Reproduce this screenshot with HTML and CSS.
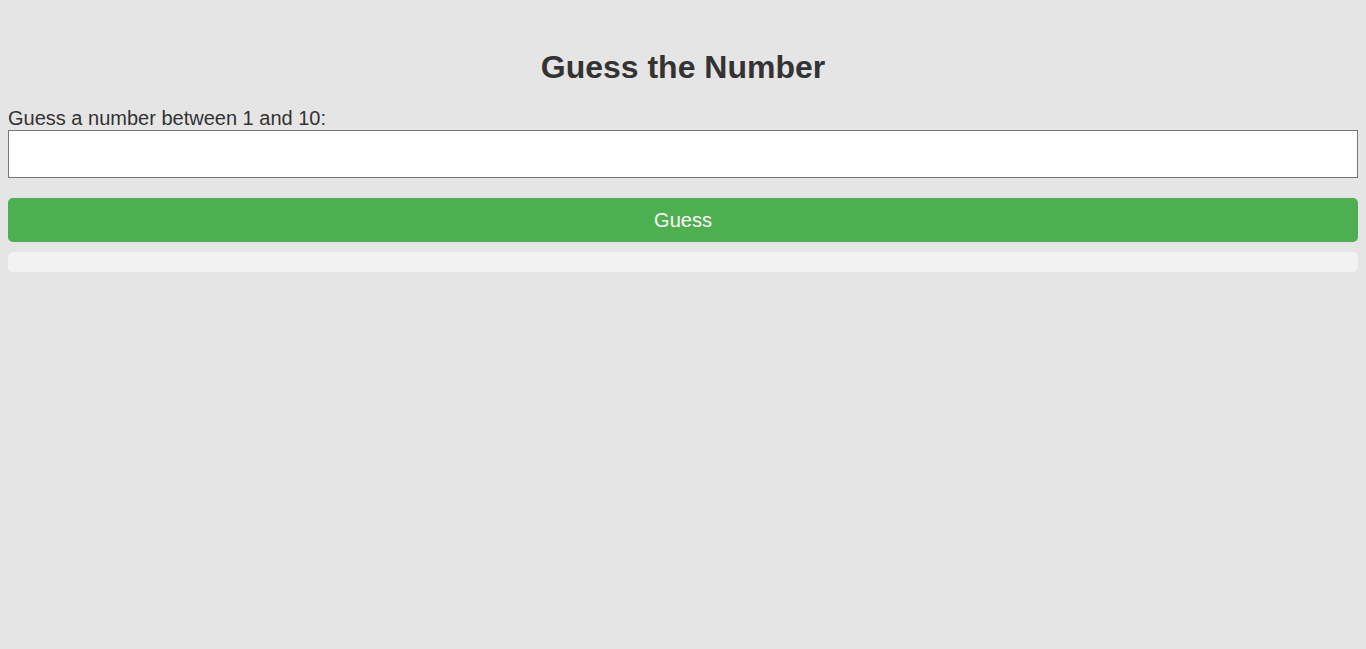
FILE: index.html
```html
<!DOCTYPE html>
<html lang="en">
<head>
<meta charset="utf-8">
<title>Guess the Number</title>
<link rel="stylesheet" href="styles.css">
</head>
<body>
<main class="game">
  <h1 class="title">Guess the Number</h1>
  <label class="prompt" for="guess">Guess a number between 1 and 10:</label>
  <input class="guess-input" id="guess" type="number">
  <button class="guess-btn" type="button">Guess</button>
  <div class="result"></div>
</main>
</body>
</html>
```

FILE: styles.css
```css
html, body {
  margin: 0;
  padding: 0;
  background: #e5e5e5;
}
body {
  font-family: "Liberation Sans", Arial, sans-serif;
  color: #333;
}
.game {
  display: flex;
  flex-direction: column;
  padding: 49px 8px 8px;
}
.title {
  margin: 0 0 22px;
  font-size: 32px;
  line-height: 36px;
  font-weight: bold;
  text-align: center;
  color: #333;
}
.prompt {
  display: block;
  font-size: 20px;
  line-height: 23px;
  margin: 0;
}
.guess-input {
  box-sizing: border-box;
  width: 100%;
  height: 48px;
  margin: 0;
  border: 1px solid #767676;
  background: #fff;
  font-size: 20px;
  padding: 0 8px;
}
.guess-btn {
  margin-top: 20px;
  height: 44px;
  border: none;
  border-radius: 5px;
  background: #4caf50;
  color: #fff;
  font-family: "Liberation Sans", Arial, sans-serif;
  font-size: 20px;
  cursor: pointer;
}
.result {
  margin-top: 10px;
  height: 20px;
  border-radius: 5px;
  background: #f2f2f2;
}
```
